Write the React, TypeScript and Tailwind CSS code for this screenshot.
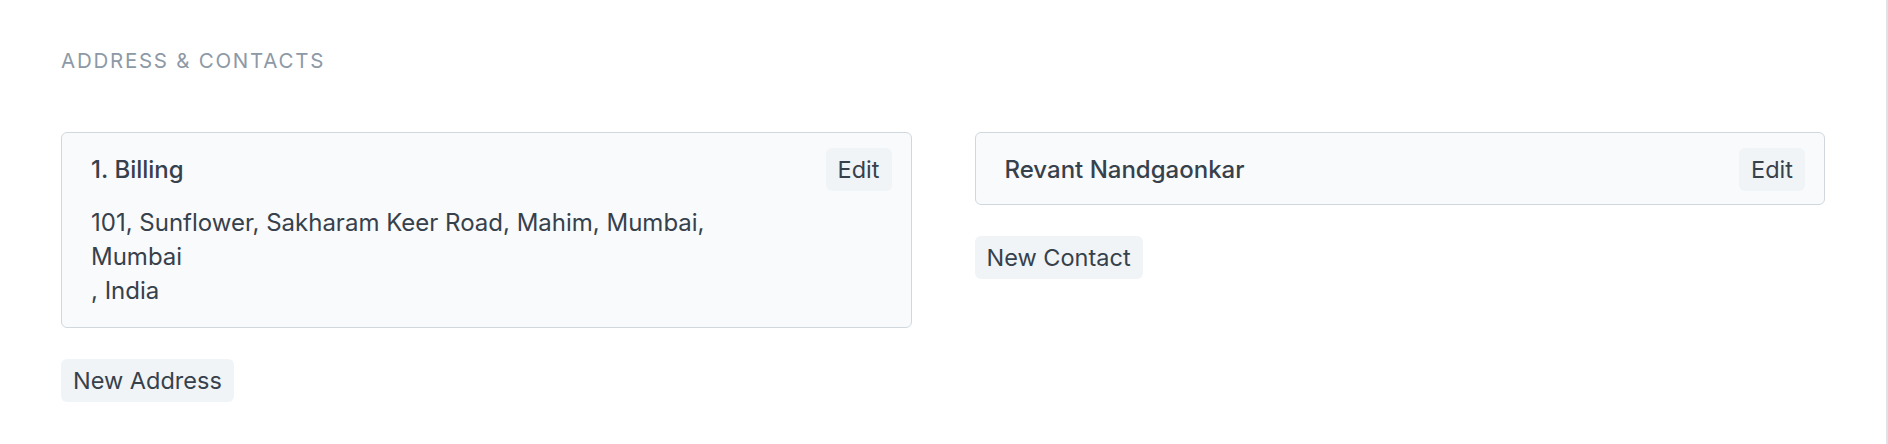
import React from 'react';

const font = { fontFamily: 'Inter, "Noto Sans", sans-serif' };

const SmallButton: React.FC<{ label: string }> = ({ label }) => (
  <button className="h-[43px] px-[12px] rounded-[6px] bg-[#f0f4f7] text-[23.5px] leading-none text-[#36414c]">
    {label}
  </button>
);

const App: React.FC = () => {
  return (
    <div style={font} className="min-h-[444px] bg-white border-r-2 border-[#dfe3e7] px-[61px] pt-[49px] text-[#36414c]">
      <div className="text-[20.5px] leading-[24px] tracking-[0.085em] text-[#8d99a6] uppercase">
        Address &amp; Contacts
      </div>

      <div className="mt-[59px] grid grid-cols-2 gap-x-[63px] items-start">
        <div className="flex flex-col items-start">
          <div className="w-full rounded-[6px] border border-[#d1d8dd] bg-[#f9fafb] pl-[29px] pr-[19px] pt-[15px] pb-[19px]">
            <div className="flex items-center justify-between">
              <span className="text-[24px] font-medium leading-[34px]">1. Billing</span>
              <SmallButton label="Edit" />
            </div>
            <p className="mt-[15px] text-[24px] leading-[34px]">
              101, Sunflower, Sakharam Keer Road, Mahim, Mumbai,
              <br />
              Mumbai
              <br />, India
            </p>
          </div>
          <div className="mt-[31px]">
            <SmallButton label="New Address" />
          </div>
        </div>

        <div className="flex flex-col items-start">
          <div className="w-full rounded-[6px] border border-[#d1d8dd] bg-[#f9fafb] pl-[29px] pr-[19px] pt-[15px] pb-[13px]">
            <div className="flex items-center justify-between">
              <span className="text-[24px] font-medium leading-[34px]">Revant Nandgaonkar</span>
              <SmallButton label="Edit" />
            </div>
          </div>
          <div className="mt-[31px]">
            <SmallButton label="New Contact" />
          </div>
        </div>
      </div>
    </div>
  );
};

export default App;
